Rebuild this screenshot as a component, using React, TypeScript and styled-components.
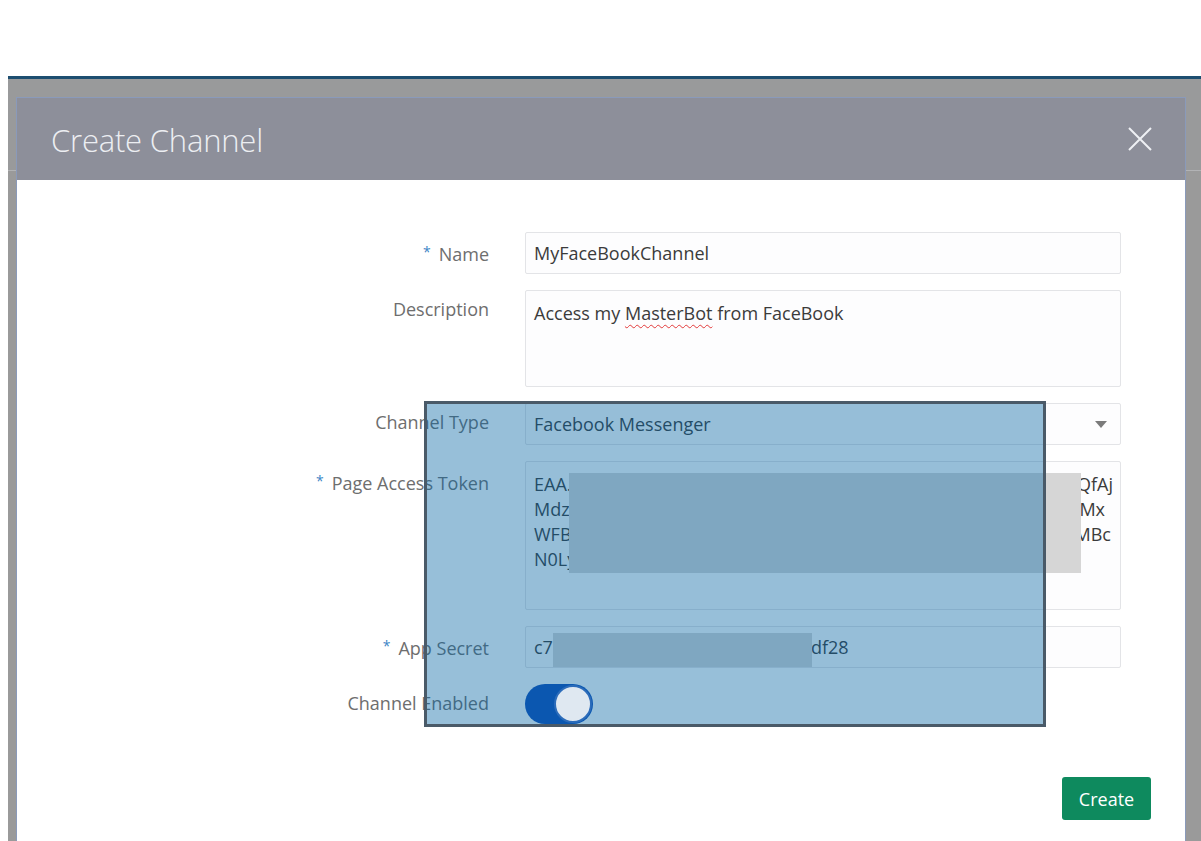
import React from 'react'
import styled, { createGlobalStyle } from 'styled-components'

const GlobalStyle = createGlobalStyle`
  html, body {
    margin: 0;
    padding: 0;
    background: #ffffff;
  }
  body {
    font-family: "Open Sans", "Noto Sans", sans-serif;
  }
  * {
    box-sizing: border-box;
  }
`

const Page = styled.div`
  position: relative;
  width: 1201px;
  height: 841px;
  overflow: hidden;
  display: flex;
  flex-direction: column;
`

const TopBand = styled.div`
  height: 76px;
  flex: none;
`

// grey backdrop behind the dialog, with the faint line of the page header under it
const Backdrop = styled.div`
  flex: 1;
  display: flex;
  margin-left: 8px;
  padding: 18px 15px 0 8px;
  border-top: 3px solid #1d4e70;
  background: linear-gradient(
    to bottom,
    #999a9b 0,
    #999a9b 91px,
    #b2b3b5 91px,
    #b2b3b5 92px,
    #9a9a9a 92px
  );
`

const Dialog = styled.div`
  flex: 1;
  display: flex;
  flex-direction: column;
  background: #ffffff;
  border: 1px solid #8a9aba;
  border-bottom: none;
`

const Header = styled.div`
  height: 82px;
  flex: none;
  display: flex;
  align-items: center;
  justify-content: space-between;
  padding: 0 33px 0 34px;
  background: #8d8f9a;
`

const Title = styled.h1`
  margin: 0;
  padding-top: 2px;
  font-size: 31px;
  font-weight: 300;
  color: #eceef2;
  letter-spacing: -0.2px;
`

const CloseButton = styled.button`
  width: 24px;
  height: 24px;
  padding: 0;
  border: none;
  background: none;
  display: flex;
`

const Body = styled.div`
  padding-top: 52px;
`

const Form = styled.div`
  display: grid;
  grid-template-columns: 1fr 596px;
  column-gap: 36px;
  row-gap: 16px;
  padding-right: 64px;
`

const Label = styled.div`
  text-align: right;
  color: #6e6e6e;
  font-size: 18px;
  line-height: 25px;
  padding-top: 7px;
`

const Star = styled.span`
  color: #3d85c6;
  font-size: 14px;
  vertical-align: 4px;
  margin-right: 8px;
`

const Field = styled.div<{ $h: number; $multi?: boolean }>`
  height: ${p => p.$h}px;
  border: 1px solid #e3e4e7;
  border-radius: 2px;
  background: #fdfdfe;
  color: #3b3b3b;
  font-size: 18px;
  line-height: 25px;
  padding: ${p => (p.$multi ? '10px 7px 0 8px' : '0 8px')};
  display: ${p => (p.$multi ? 'block' : 'flex')};
  align-items: center;
  white-space: nowrap;
`

const SelectField = styled(Field)`
  justify-content: space-between;
  padding-right: 13px;
`

const Caret = styled.span`
  width: 0;
  height: 0;
  border-left: 6px solid transparent;
  border-right: 6px solid transparent;
  border-top: 7px solid #7b7b7b;
`

const Misspelled = styled.span`
  text-decoration: underline wavy #e23a3a;
  text-decoration-thickness: 1px;
  text-underline-offset: 4px;
`

const TokenLine = styled.div<{ $end: number }>`
  display: flex;
  justify-content: space-between;
  padding-right: ${p => p.$end}px;
`

const Masked = styled.span<{ $w: number }>`
  display: inline-block;
  width: ${p => p.$w}px;
`

const Switch = styled.div`
  position: relative;
  z-index: 3;
  width: 68px;
  height: 40px;
  border-radius: 20px;
  background: #0b57b0;
  display: flex;
  align-items: center;
  justify-content: flex-end;
  padding: 1px;
`

const Knob = styled.div`
  width: 38px;
  height: 38px;
  border-radius: 50%;
  background: #dfe8f1;
  border: 2px solid #2c6cba;
`

const Footer = styled.div`
  display: flex;
  justify-content: flex-end;
  padding: 53px 34px 0 0;
`

const CreateButton = styled.button`
  width: 89px;
  height: 43px;
  border: none;
  border-radius: 3px;
  background: #0e8a5e;
  color: #ffffff;
  font-family: inherit;
  font-size: 18px;
  padding: 0;
`

// annotation layers drawn over the screenshot
const Redaction = styled.div<{ $x: number; $y: number; $w: number; $h: number }>`
  position: absolute;
  z-index: 1;
  left: ${p => p.$x}px;
  top: ${p => p.$y}px;
  width: ${p => p.$w}px;
  height: ${p => p.$h}px;
  background: #d6d6d6;
`

const Highlight = styled.div`
  position: absolute;
  z-index: 2;
  left: 424px;
  top: 401px;
  width: 622px;
  height: 326px;
  border: 3px solid #4a5a68;
  background: rgba(5, 101, 163, 0.415);
`

const tokenLines = [
  { left: 'EAA.', right: 'QfAj', end: 0 },
  { left: 'Mdz', right: 'Mx', end: 8 },
  { left: 'WFB', right: 'MBc', end: 2 },
  { left: 'N0Ly', right: '', end: 0 },
]

export default function App() {
  return (
    <>
      <GlobalStyle />
      <Page>
        <TopBand />
        <Backdrop>
          <Dialog>
            <Header>
              <Title>Create Channel</Title>
              <CloseButton aria-label="Close">
                <svg width="24" height="24" viewBox="0 0 24 24">
                  <path d="M1 1 L23 23 M23 1 L1 23" stroke="#eef0f4" strokeWidth="2" fill="none" />
                </svg>
              </CloseButton>
            </Header>
            <Body>
              <Form>
                <Label><Star>*</Star>Name</Label>
                <Field $h={42}>MyFaceBookChannel</Field>

                <Label>Description</Label>
                <Field $h={97} $multi>
                  Access my <Misspelled>MasterBot</Misspelled> from FaceBook
                </Field>

                <Label>Channel Type</Label>
                <SelectField $h={42}>
                  Facebook Messenger
                  <Caret />
                </SelectField>

                <Label><Star>*</Star>Page Access Token</Label>
                <Field $h={149} $multi>
                  {tokenLines.map((l, i) => (
                    <TokenLine key={i} $end={l.end}>
                      <span>{l.left}</span>
                      <span>{l.right}</span>
                    </TokenLine>
                  ))}
                </Field>

                <Label><Star>*</Star>App Secret</Label>
                <Field $h={42}>
                  c7<Masked $w={258} />df28
                </Field>

                <Label>Channel Enabled</Label>
                <div>
                  <Switch>
                    <Knob />
                  </Switch>
                </div>
              </Form>
              <Footer>
                <CreateButton>Create</CreateButton>
              </Footer>
            </Body>
          </Dialog>
        </Backdrop>
        <Redaction $x={569} $y={473} $w={512} $h={100} />
        <Redaction $x={553} $y={633} $w={259} $h={34} />
        <Highlight />
      </Page>
    </>
  )
}
